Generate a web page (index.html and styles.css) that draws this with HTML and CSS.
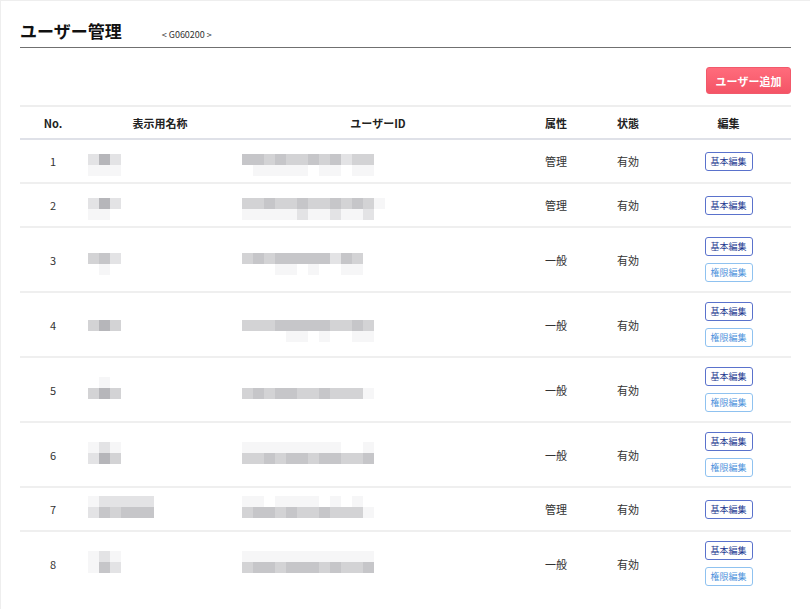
FILE: index.html
```html
<!DOCTYPE html>
<html lang="ja">
<head>
<meta charset="UTF-8">
<meta name="viewport" content="width=device-width, initial-scale=1.0">
<title>ユーザー管理</title>
<link rel="stylesheet" href="styles.css">
</head>
<body>

<div class="page">
  <div class="page-head">
    <h1>ユーザー管理</h1>
    <span class="screen-id">&lt; G060200 &gt;</span>
  </div>

  <div class="toolbar">
    <button class="btn-add">ユーザー追加</button>
  </div>

  <table class="user-table">
    <thead>
      <tr>
        <th class="col-no">No.</th>
        <th class="col-name">表示用名称</th>
        <th class="col-id">ユーザーID</th>
        <th class="col-attr">属性</th>
        <th class="col-state">状態</th>
        <th class="col-edit">編集</th>
      </tr>
    </thead>
    <tbody>
      <tr>
        <td class="num">1</td>
        <td class="name"><div class="mz"><div class="mr"><i class="b"></i><i class="e"></i><i class="b"></i></div><div class="mr"><i class="a"></i><i class="a"></i><i class="a"></i></div></div></td>
        <td class="uid"><div class="mz"><div class="mr"><i class="d"></i><i class="d"></i><i class="c"></i><i class="d"></i><i class="c"></i><i class="c"></i><i class="d"></i><i class="c"></i><i class="d"></i><i class="b"></i><i class="c"></i><i class="c"></i></div><div class="mr"><i class="w"></i><i class="a"></i><i class="a"></i><i class="a"></i><i class="a"></i><i class="a"></i><i class="w"></i><i class="a"></i><i class="a"></i><i class="w"></i><i class="a"></i><i class="a"></i></div></div></td>
        <td>管理</td>
        <td>有効</td>
        <td class="edit"><button class="btn-basic">基本編集</button></td>
      </tr>
      <tr>
        <td class="num">2</td>
        <td class="name"><div class="mz"><div class="mr"><i class="b"></i><i class="e"></i><i class="b"></i></div><div class="mr"><i class="a"></i><i class="a"></i><i class="w"></i></div></div></td>
        <td class="uid"><div class="mz"><div class="mr"><i class="c"></i><i class="c"></i><i class="d"></i><i class="c"></i><i class="c"></i><i class="d"></i><i class="c"></i><i class="c"></i><i class="d"></i><i class="c"></i><i class="d"></i><i class="c"></i><i class="a"></i></div><div class="mr"><i class="a"></i><i class="a"></i><i class="a"></i><i class="a"></i><i class="a"></i><i class="b"></i><i class="a"></i><i class="a"></i><i class="b"></i><i class="a"></i><i class="a"></i><i class="b"></i></div></div></td>
        <td>管理</td>
        <td>有効</td>
        <td class="edit"><button class="btn-basic">基本編集</button></td>
      </tr>
      <tr>
        <td class="num">3</td>
        <td class="name"><div class="mz"><div class="mr"><i class="c"></i><i class="d"></i><i class="b"></i></div><div class="mr"><i class="w"></i><i class="a"></i><i class="w"></i></div></div></td>
        <td class="uid"><div class="mz"><div class="mr"><i class="c"></i><i class="d"></i><i class="c"></i><i class="d"></i><i class="d"></i><i class="d"></i><i class="d"></i><i class="d"></i><i class="b"></i><i class="d"></i><i class="c"></i></div><div class="mr"><i class="w"></i><i class="w"></i><i class="w"></i><i class="a"></i><i class="a"></i><i class="w"></i><i class="a"></i><i class="w"></i><i class="w"></i><i class="a"></i><i class="a"></i></div></div></td>
        <td>一般</td>
        <td>有効</td>
        <td class="edit"><button class="btn-basic">基本編集</button><button class="btn-perm">権限編集</button></td>
      </tr>
      <tr>
        <td class="num">4</td>
        <td class="name"><div class="mz mid"><div class="mr"><i class="c"></i><i class="e"></i><i class="c"></i></div><div class="mr"><i class="w"></i><i class="w"></i><i class="w"></i></div></div></td>
        <td class="uid"><div class="mz mid"><div class="mr"><i class="c"></i><i class="c"></i><i class="c"></i><i class="d"></i><i class="d"></i><i class="d"></i><i class="d"></i><i class="d"></i><i class="c"></i><i class="c"></i><i class="d"></i><i class="c"></i></div><div class="mr"><i class="w"></i><i class="w"></i><i class="w"></i><i class="w"></i><i class="a"></i><i class="a"></i><i class="w"></i><i class="a"></i><i class="w"></i><i class="w"></i><i class="a"></i><i class="a"></i></div></div></td>
        <td>一般</td>
        <td>有効</td>
        <td class="edit"><button class="btn-basic">基本編集</button><button class="btn-perm">権限編集</button></td>
      </tr>
      <tr>
        <td class="num">5</td>
        <td class="name"><div class="mz up"><div class="mr"><i class="w"></i><i class="a"></i><i class="w"></i></div><div class="mr"><i class="c"></i><i class="e"></i><i class="c"></i></div></div></td>
        <td class="uid"><div class="mz up"><div class="mr"><i class="w"></i><i class="w"></i><i class="w"></i><i class="w"></i><i class="w"></i><i class="w"></i><i class="w"></i><i class="w"></i><i class="w"></i><i class="w"></i><i class="w"></i><i class="w"></i></div><div class="mr"><i class="c"></i><i class="d"></i><i class="c"></i><i class="d"></i><i class="d"></i><i class="c"></i><i class="c"></i><i class="d"></i><i class="c"></i><i class="c"></i><i class="c"></i><i class="a"></i></div></div></td>
        <td>一般</td>
        <td>有効</td>
        <td class="edit"><button class="btn-basic">基本編集</button><button class="btn-perm">権限編集</button></td>
      </tr>
      <tr>
        <td class="num">6</td>
        <td class="name"><div class="mz up"><div class="mr"><i class="a"></i><i class="b"></i><i class="a"></i></div><div class="mr"><i class="b"></i><i class="e"></i><i class="c"></i></div></div></td>
        <td class="uid"><div class="mz up"><div class="mr"><i class="a"></i><i class="a"></i><i class="a"></i><i class="a"></i><i class="a"></i><i class="a"></i><i class="a"></i><i class="a"></i><i class="a"></i><i class="w"></i><i class="w"></i><i class="a"></i></div><div class="mr"><i class="c"></i><i class="c"></i><i class="d"></i><i class="c"></i><i class="d"></i><i class="d"></i><i class="c"></i><i class="d"></i><i class="d"></i><i class="c"></i><i class="c"></i><i class="d"></i></div></div></td>
        <td>一般</td>
        <td>有効</td>
        <td class="edit"><button class="btn-basic">基本編集</button><button class="btn-perm">権限編集</button></td>
      </tr>
      <tr>
        <td class="num">7</td>
        <td class="name"><div class="mz up"><div class="mr"><i class="a"></i><i class="b"></i><i class="b"></i><i class="b"></i><i class="b"></i><i class="b"></i></div><div class="mr"><i class="b"></i><i class="d"></i><i class="c"></i><i class="d"></i><i class="d"></i><i class="d"></i></div></div></td>
        <td class="uid"><div class="mz up"><div class="mr"><i class="a"></i><i class="a"></i><i class="w"></i><i class="a"></i><i class="a"></i><i class="a"></i><i class="a"></i><i class="w"></i><i class="a"></i><i class="w"></i><i class="a"></i></div><div class="mr"><i class="c"></i><i class="d"></i><i class="d"></i><i class="c"></i><i class="d"></i><i class="c"></i><i class="c"></i><i class="d"></i><i class="c"></i><i class="c"></i><i class="c"></i><i class="a"></i></div></div></td>
        <td>管理</td>
        <td>有効</td>
        <td class="edit"><button class="btn-basic">基本編集</button></td>
      </tr>
      <tr>
        <td class="num">8</td>
        <td class="name"><div class="mz up"><div class="mr"><i class="a"></i><i class="b"></i><i class="a"></i></div><div class="mr"><i class="a"></i><i class="d"></i><i class="b"></i></div></div></td>
        <td class="uid"><div class="mz up"><div class="mr"><i class="a"></i><i class="a"></i><i class="a"></i><i class="a"></i><i class="a"></i><i class="a"></i><i class="a"></i><i class="a"></i><i class="a"></i><i class="a"></i><i class="a"></i><i class="a"></i></div><div class="mr"><i class="c"></i><i class="d"></i><i class="d"></i><i class="c"></i><i class="d"></i><i class="d"></i><i class="d"></i><i class="c"></i><i class="d"></i><i class="c"></i><i class="c"></i><i class="d"></i></div></div></td>
        <td>一般</td>
        <td>有効</td>
        <td class="edit"><button class="btn-basic">基本編集</button><button class="btn-perm">権限編集</button></td>
      </tr>
    </tbody>
  </table>
</div>

</body>
</html>
```

FILE: styles.css
```css
  html, body {
    margin: 0;
    background: #fff;
  }
  body {
    font-family: "Noto Sans CJK JP", "Noto Sans", sans-serif;
    color: #222;
    border-top: 1px solid #eee;
    border-left: 1px solid #eee;
    height: 609px;
    box-sizing: border-box;
  }

  .page {
    padding: 0 19px 0 19px;
  }

  .page-head {
    display: flex;
    align-items: flex-end;
    padding-top: 18px;
    padding-bottom: 4px;
    border-bottom: 1px solid #707070;
  }
  .page-head h1 {
    margin: 0;
    font-size: 17px;
    font-weight: bold;
    line-height: 24px;
    color: #111;
  }
  .screen-id {
    font-size: 9px;
    color: #333;
    margin-left: 40px;
    line-height: 14px;
    padding-bottom: 1px;
  }

  .toolbar {
    display: flex;
    justify-content: flex-end;
    padding-top: 19px;
    padding-bottom: 11px;
  }
  .btn-add {
    width: 85px;
    height: 27px;
    border: 1px solid #f2596b;
    border-radius: 3px;
    background: linear-gradient(#ff6c7c, #f45466);
    color: #fff;
    font-family: inherit;
    font-size: 11px;
    font-weight: bold;
    padding: 0;
    cursor: pointer;
  }

  .user-table {
    width: 100%;
    border-collapse: collapse;
    table-layout: fixed;
    border-top: 2px solid #eeeeee;
    font-size: 11px;
  }
  .user-table th {
    height: 31px;
    padding: 0;
    font-weight: bold;
    color: #222;
    border-bottom: 2px solid #dfe1e8;
  }
  .col-no { width: 66px; }
  .col-name { width: 148px; }
  .col-id { width: 288px; }
  .col-attr { width: 68px; }
  .col-state { width: 76px; }

  .user-table td {
    height: 24px;
    padding: 9px 0;
    text-align: center;
    color: #333;
    border-bottom: 2px solid #efefef;
    vertical-align: middle;
  }
  .user-table tbody tr:last-child td {
    border-bottom: none;
  }
  .user-table td.name {
    text-align: left;
    padding-left: 2px;
  }
  .user-table td.uid {
    text-align: left;
    padding-left: 8px;
  }

  /* blurred personal data */
  .mz {
    display: inline-block;
    vertical-align: middle;
    margin: 4px 0 -4px;
  }
  .mz.mid {
    margin: 6px 0 -6px;
  }
  .mz.up {
    margin: -2px 0 2px;
  }
  .mr {
    display: flex;
    height: 11px;
  }
  .mr i {
    display: block;
    width: 11px;
    height: 11px;
  }
  .mr .w { background: #ffffff; }
  .mr .a { background: #f6f6f7; }
  .mr .b { background: #e3e3e5; }
  .mr .c { background: #d3d3d5; }
  .mr .d { background: #c6c6c9; }
  .mr .e { background: #b6b6ba; }

  .edit button {
    display: block;
    margin: 0 auto;
    width: 48px;
    height: 19px;
    padding: 0;
    border-radius: 3px;
    background: #fff;
    font-family: inherit;
    font-size: 9px;
    font-weight: normal;
    cursor: pointer;
  }
  .edit button + button {
    margin-top: 7px;
  }
  .btn-basic {
    border: 1px solid #5a72cc;
    color: #23388f;
  }
  .btn-perm {
    border: 1px solid #8fc2f0;
    color: #4f93dc;
  }
```
